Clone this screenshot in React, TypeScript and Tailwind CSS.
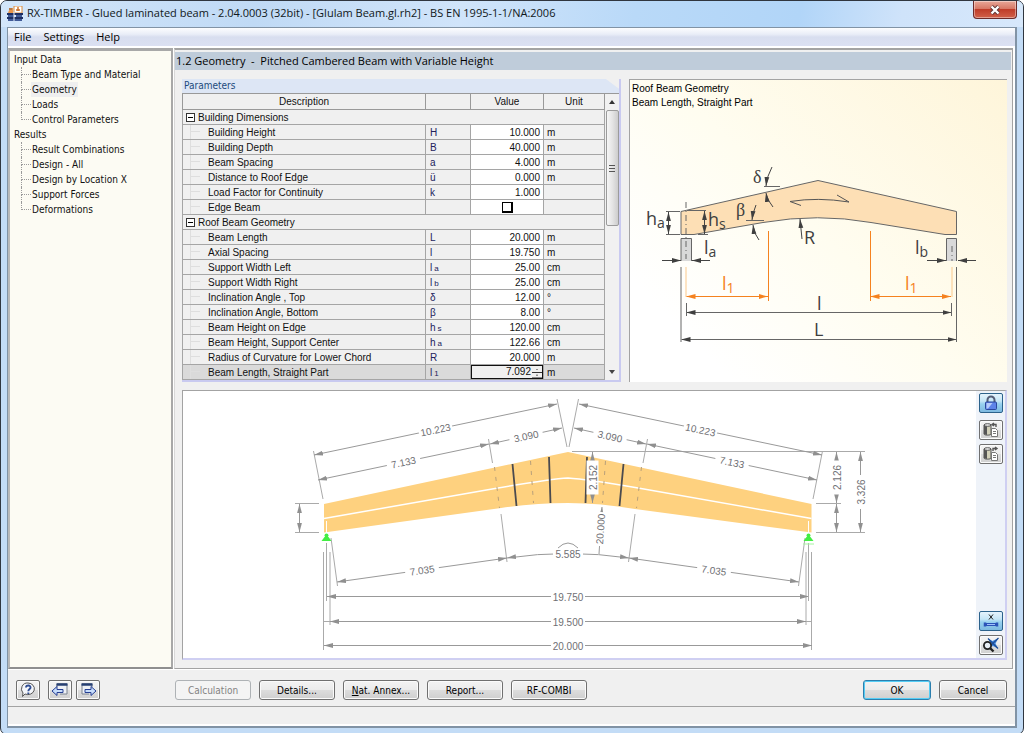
import type { ReactNode } from "react";

type ParamRow = {
  name: string;
  symbol?: string;
  sub?: string;
  value?: string;
  unit?: string;
  kind?: "check" | "active";
};

const navigation = [
  { title: "Input Data", items: ["Beam Type and Material", "Geometry", "Loads", "Control Parameters"] },
  {
    title: "Results",
    items: ["Result Combinations", "Design - All", "Design by Location X", "Support Forces", "Deformations"],
  },
];

const groups: { title: string; rows: ParamRow[] }[] = [
  {
    title: "Building Dimensions",
    rows: [
      { name: "Building Height", symbol: "H", value: "10.000", unit: "m" },
      { name: "Building Depth", symbol: "B", value: "40.000", unit: "m" },
      { name: "Beam Spacing", symbol: "a", value: "4.000", unit: "m" },
      { name: "Distance to Roof Edge", symbol: "ü", value: "0.000", unit: "m" },
      { name: "Load Factor for Continuity", symbol: "k", value: "1.000" },
      { name: "Edge Beam", kind: "check" },
    ],
  },
  {
    title: "Roof Beam Geometry",
    rows: [
      { name: "Beam Length", symbol: "L", value: "20.000", unit: "m" },
      { name: "Axial Spacing", symbol: "l", value: "19.750", unit: "m" },
      { name: "Support Width Left", symbol: "l", sub: "a", value: "25.00", unit: "cm" },
      { name: "Support Width Right", symbol: "l", sub: "b", value: "25.00", unit: "cm" },
      { name: "Inclination Angle , Top", symbol: "δ", value: "12.00", unit: "°" },
      { name: "Inclination Angle, Bottom", symbol: "β", value: "8.00", unit: "°" },
      { name: "Beam Height on Edge", symbol: "h", sub: "s", value: "120.00", unit: "cm" },
      { name: "Beam Height, Support Center", symbol: "h", sub: "a", value: "122.66", unit: "cm" },
      { name: "Radius of Curvature for Lower Chord", symbol: "R", value: "20.000", unit: "m" },
      { name: "Beam Length, Straight Part", symbol: "l", sub: "1", value: "7.092", unit: "m", kind: "active" },
    ],
  },
];

function AppIcon() {
  return (
    <svg className="h-4 w-4" viewBox="0 0 16 16" aria-hidden="true">
      <rect x="7" y="0" width="8" height="7" fill="#fff" stroke="#d98b3d" />
      <path d="M9 4h4M11 1v4" stroke="#c96b24" strokeWidth="1.4" />
      <path d="M1 7c1-4 3-5 5-5v5z" fill="#e7944a" />
      <path d="M2 2h3v2H2z" fill="#b77a46" />
      <path d="M0 8h16M0 12h16" stroke="#1d2f63" strokeWidth="2" />
      <path d="M1 10h6M9 10h6M1 14h14" stroke="#405a97" strokeWidth="2" />
      <path d="M7 6v9" stroke="#e3e9f5" />
    </svg>
  );
}

function TitleBar() {
  return (
    <header className="flex h-[26px] items-start justify-between bg-[linear-gradient(100deg,#d3e6fa_0%,#c0daf5_25%,#d0e4fa_45%,#b9d9f8_62%,#b1d5f8_78%,#cfe3fa_88%,#d7e8fb_100%)] pl-1.5">
      <h1 className="flex h-[25px] items-center gap-1 whitespace-nowrap font-['Open_Sans',sans-serif] text-[11px] text-[#101820]">
        <AppIcon />
        RX-TIMBER - Glued laminated beam - 2.04.0003 (32bit) - [Glulam Beam.gl.rh2] - BS EN 1995-1-1/NA:2006
      </h1>
      <button
        aria-label="Close"
        className="mr-1.5 flex h-[18px] w-11 items-center justify-center rounded-b-[4px] border border-t-0 border-[#6c2b2a] bg-[linear-gradient(#e8a798,#d77866_45%,#bf3c29_50%,#d1614a)] shadow-[inset_0_0_0_1px_rgba(255,255,255,0.4)]"
      >
        <svg className="h-3 w-3" viewBox="0 0 12 12" aria-hidden="true">
          <path d="M2.5 2.5l7 7M9.5 2.5l-7 7" stroke="#5b3434" strokeWidth="4" />
          <path d="M2.5 2.5l7 7M9.5 2.5l-7 7" stroke="#fff" strokeWidth="2.4" />
        </svg>
      </button>
    </header>
  );
}

function MenuBar() {
  return (
    <nav className="flex h-[18px] items-center bg-[linear-gradient(#fcfdfe,#e9edf7_35%,#d8deef_50%,#dbe0f2)] px-1.5 font-['Open_Sans',sans-serif] text-[11px] text-black">
      <button className="pr-3">File</button>
      <button className="pr-3">Settings</button>
      <button>Help</button>
    </nav>
  );
}

function Sidebar() {
  return (
    <aside className="w-[165px] shrink-0 border-2 border-t-[3px] border-[#a8a8a8] border-b-[#8f8f8f] border-l-[#b9b9b9] bg-[#fcfbf3] pt-px pl-1">
      {navigation.map((section) => (
        <div key={section.title}>
          <div className="h-[15px] leading-[15px]">{section.title}</div>
          <ul>
            {section.items.map((item, i) => (
              <li key={item} className="flex h-[15px] items-center whitespace-nowrap">
                <span className="ml-[7px] h-full w-2.5">
                  <span className="block h-2 w-full border-b border-l border-dotted border-[#9a9a9a]" />
                  {i < section.items.length - 1 && (
                    <span className="block h-[7px] border-l border-dotted border-[#9a9a9a]" />
                  )}
                </span>
                <a href="#" className={item === "Geometry" ? "bg-[#efefef] px-px leading-[15px]" : "px-px leading-[15px]"}>
                  {item}
                </a>
              </li>
            ))}
          </ul>
        </div>
      ))}
    </aside>
  );
}

function ValueCell({ row }: { row: ParamRow }) {
  if (row.kind === "check") {
    return (
      <td className="border border-[#a5a5a5] bg-white p-0">
        <input
          type="checkbox"
          aria-label={row.name}
          className="mx-auto block h-[11px] w-[11px] appearance-none border border-r-2 border-b-2 border-black bg-white"
        />
      </td>
    );
  }
  if (row.kind === "active") {
    return (
      <td className="border border-[#a5a5a5] bg-[#f0f0f0] p-0">
        <div className="flex h-[14px] items-center outline-1 -outline-offset-1 outline-[#111] outline-solid">
          <input
            aria-label={row.name}
            defaultValue={row.value}
            className="h-3 w-full min-w-0 flex-1 bg-transparent text-right leading-3 outline-none"
          />
          <svg className="h-3 w-3 shrink-0" viewBox="0 0 12 12" aria-hidden="true">
            <path d="M1 6.500h10M6 3v1M6 8.500v1.500" stroke="#333" strokeWidth="1" />
            <path d="M1 11.500h10" stroke="#888" />
          </svg>
        </div>
      </td>
    );
  }
  return <td className="border border-[#a5a5a5] bg-white p-0 pr-[3px] text-right">{row.value}</td>;
}

function ParameterTable() {
  return (
    <section className="w-[439px] shrink-0 border-r-2 border-b-2 border-[#c9caf0]">
      <h3 className="h-[14px] bg-[#dde6f5] pl-0.5 leading-[14px] text-[#1c4a7c] [clip-path:polygon(0_0,97%_0,100%_70%,100%_100%,0_100%)]">
        Parameters
      </h3>
      <div className="flex">
        <table className="w-[423px] table-fixed border-collapse bg-[#f0f0f0] font-['Liberation_Sans',sans-serif] text-[10px] leading-[13px] text-[#111]">
          <colgroup>
            <col />
            <col className="w-[45px]" />
            <col className="w-[73px]" />
            <col className="w-[61px]" />
          </colgroup>
          <thead>
            <tr className="h-4">
              {["Description", "", "Value", "Unit"].map((label, i) => (
                <th key={i} className="border border-[#999] p-0 font-normal">
                  {label}
                </th>
              ))}
            </tr>
          </thead>
          {groups.map((group) => (
            <tbody key={group.title}>
              <tr className="h-[15px]">
                <td colSpan={4} className="border border-[#a5a5a5] p-0">
                  <div className="flex items-center gap-[3px] pl-[3px]">
                    <button
                      aria-label={`Collapse ${group.title}`}
                      className="flex h-[9px] w-[9px] items-center justify-center border border-[#333] bg-white"
                    >
                      <span className="h-px w-[5px] bg-black" />
                    </button>
                    {group.title}
                  </div>
                </td>
              </tr>
              {group.rows.map((row) => (
                <tr key={row.name} className={row.kind === "active" ? "h-[15px] bg-[#dadada]" : "h-[15px]"}>
                  <td className="border border-[#a5a5a5] p-0">
                    <div className="flex h-[14px] items-center whitespace-nowrap pl-[7px]">
                      <span className="h-full w-2.5 border-l border-[#dedede]">
                        <span className="block h-[7px] border-b border-[#dedede]" />
                      </span>
                      <span className="pl-2">{row.name}</span>
                    </div>
                  </td>
                  <td className="border border-[#a5a5a5] p-0 pl-1 text-[#22225c]">
                    {row.symbol}
                    {row.sub && <span className="pl-0.5 text-[8px] leading-none">{row.sub}</span>}
                  </td>
                  <ValueCell row={row} />
                  <td className="border border-[#a5a5a5] p-0 pl-[3px]">{row.unit}</td>
                </tr>
              ))}
            </tbody>
          ))}
        </table>
        <div className="flex flex-1 flex-col items-center border-t border-[#999] bg-[#f1f1f1]">
          <svg className="my-1.5 h-1 w-1.5" viewBox="0 0 6 4" aria-hidden="true">
            <path d="M0 4l3-4 3 4z" fill="#333" />
          </svg>
          <div className="flex h-[116px] w-[13px] items-center justify-center rounded-[2px] border border-[#9b9b9b] bg-[linear-gradient(90deg,#f6f6f6,#e4e4e4_50%,#cdcdcd)]">
            <span className="h-[7px] w-1.5 border-y border-[#555] bg-[linear-gradient(transparent_40%,#555_40%,#555_60%,transparent_60%)]" />
          </div>
          <svg className="mt-auto mb-1.5 h-1 w-1.5" viewBox="0 0 6 4" aria-hidden="true">
            <path d="M0 0l3 4 3-4z" fill="#444" />
          </svg>
        </div>
      </div>
    </section>
  );
}

function ArrowMarker({ id, color }: { id: string; color: string }) {
  return (
    <marker
      id={id}
      viewBox="0 0 9 6"
      refX="9"
      refY="3"
      markerWidth="9"
      markerHeight="6"
      markerUnits="userSpaceOnUse"
      orient="auto-start-reverse"
    >
      <path d="M0 0.600L9 3L0 5.400z" fill={color} />
    </marker>
  );
}

function Symbol({ x, y, sub, fill = "#3f3f3f", children }: { x: number; y: number; sub?: string; fill?: string; children: ReactNode }) {
  return (
    <text x={x} y={y} fill={fill} fontSize="18" fontFamily="Open Sans, sans-serif">
      {children}
      {sub && (
        <tspan dy="3" fontSize="14">
          {sub}
        </tspan>
      )}
    </text>
  );
}

function GeometrySketch() {
  return (
    <section className="relative min-w-0 flex-1 border-t border-l border-[#a3a3a3] bg-[linear-gradient(225deg,#fef5da,#fffdf0_50%,#fff_85%)] font-['Liberation_Sans',sans-serif]">
      <p className="absolute top-0.5 left-0.5 text-[10px] leading-[14px] text-black">
        Roof Beam Geometry
        <br />
        Beam Length, Straight Part
      </p>
      <svg className="h-full w-full" viewBox="629 79 377 299" preserveAspectRatio="xMidYMin" role="img" aria-label="Beam geometry">
        <defs>
          <ArrowMarker id="sketch" color="#3f3f3f" />
          <ArrowMarker id="sketch-active" color="#f5821f" />
        </defs>
        <path
          d="M680 210.500L817 179.500L955.500 210.500V233.500H944L870 221.500Q817 212 762 221.500L693 233.500H680z"
          fill="#fddfb5"
          stroke="#666"
        />
        <path d="M680 238h10.500v22H680zM945.500 238H956v22h-10.500z" fill="#d9d9d9" stroke="none" />
        <g fill="none" stroke="#666">
          <path d="M680 260V237.500H690.500V260M945.500 260V237.500H955.500V260" />
          <path d="M685 201V258M951 245V260" strokeDasharray="6 3 1 3" />
          <path d="M665 210.500h14M665 233.500h14M686 209.500h19M697 233.500h10M763 185.500h16M745 219.500h18" />
          <path d="M680 266V341M955.500 266V341M685.500 302v13M950.500 302v13" />
        </g>
        <g fill="none" stroke="#444" markerEnd="url(#sketch)">
          <path d="M667.500 222V211" />
          <path d="M667.500 222V233" />
          <path d="M703.500 222V210" />
          <path d="M703.500 222V233" />
          <path d="M661 259.500H680" />
          <path d="M709 259.500H691" />
          <path d="M926 259.500H945" />
          <path d="M975 259.500H957" />
          <path d="M771 166Q766 175 765 185" />
          <path d="M772 206Q766 199 765 192" />
          <path d="M755 204Q752 211 751 219" />
          <path d="M758 239Q753 233 752 224" />
          <path d="M801 238L799 218" />
        </g>
        <path d="M685.500 311.500H950.500" stroke="#666" markerStart="url(#sketch)" markerEnd="url(#sketch)" />
        <path d="M680.500 338.500H955.500" stroke="#666" markerStart="url(#sketch)" markerEnd="url(#sketch)" />
        <path d="M800 204.500L789 200.500Q817 196 848 201L836 194" fill="none" stroke="#555" />
        <path d="M685 266V296M951 266V296" stroke="#fbc98c" />
        <g stroke="#f5821f">
          <path d="M767.500 230V300M869.500 230V300" />
          <path d="M685.500 295.500H767" markerStart="url(#sketch-active)" markerEnd="url(#sketch-active)" />
          <path d="M869.500 295.500H950" markerStart="url(#sketch-active)" markerEnd="url(#sketch-active)" />
        </g>
        <Symbol x={645} y={224} sub="a">h</Symbol>
        <Symbol x={707} y={225} sub="s">h</Symbol>
        <Symbol x={703} y={253} sub="a">l</Symbol>
        <Symbol x={914} y={253} sub="b">l</Symbol>
        <Symbol x={721} y={289} sub="1" fill="#f5821f">l</Symbol>
        <Symbol x={904} y={289} sub="1" fill="#f5821f">l</Symbol>
        <Symbol x={803} y={243}>R</Symbol>
        <Symbol x={816} y={309}>l</Symbol>
        <Symbol x={813} y={335}>L</Symbol>
        <g fontFamily="Liberation Serif, serif" fontSize="18" fill="#3f3f3f">
          <text x="752" y="182">δ</text>
          <text x="735" y="215">β</text>
        </g>
      </svg>
    </section>
  );
}

type DimensionProps = { x1: number; y1: number; x2: number; y2: number; label?: string };

// Dimension line with arrowheads and its label centred on the line
function Dimension({ x1, y1, x2, y2, label }: DimensionProps) {
  const angle = (Math.atan2(y2 - y1, x2 - x1) * 180) / Math.PI;
  return (
    <g>
      <line x1={x1} y1={y1} x2={x2} y2={y2} stroke="#999" markerStart="url(#dim)" markerEnd="url(#dim)" />
      {label && (
        <g transform={`translate(${(x1 + x2) / 2} ${(y1 + y2) / 2}) rotate(${angle})`}>
          <rect x="-17" y="-6" width="34" height="12" fill="#fff" />
          <text y="4" textAnchor="middle">
            {label}
          </text>
        </g>
      )}
    </g>
  );
}

function Support({ x }: { x: number }) {
  return (
    <g>
      <path d={`M${x} 520V532`} stroke="#fff" />
      <path d={`M${x} 542V600`} stroke="#aaa" />
      <circle cx={x} cy="534.500" r="2" fill="#43ee43" />
      <path d={`M${x - 5} 540L${x - 2} 536H${x + 2}L${x + 5} 540z`} fill="#43ee43" />
    </g>
  );
}

function BeamDrawing() {
  return (
    <svg className="h-full w-full min-w-0 flex-1" viewBox="183 390 793 267" role="img" aria-label="Dimensioned beam">
      <defs>
        <ArrowMarker id="dim" color="#909090" />
      </defs>
      <path
        d="M324 503L568 451L811.500 503V531.500L635 508Q601 502 568 502Q535 502 501 507L324 531.500z"
        fill="#fed17f"
      />
      <path d="M324 517.500L495 487.500Q550 478 568 477Q586 478 641 487.500L811.500 517.500" fill="none" stroke="#fff" strokeWidth="1.500" />
      <path
        d="M512.500 463L516.500 505M549 456L550.500 502M587 456L585.500 502M623.500 463L619.500 505"
        stroke="#4a4a4f"
        strokeWidth="1.800"
      />
      <path
        d="M494.500 466L499.500 507M530.500 460L533.500 502M605.500 460L602.500 502M641.500 466L636.500 507"
        stroke="#b9a07a"
        strokeDasharray="4 6"
      />
      <path
        d="M313.500 450L323 498M488.500 438L492.500 462M557 398L567 446M822.500 450L813 498M647.500 438L643 462M578.500 398L569 446
          M295 502.500H319M295 531.500H319M331 537L337.500 585M501 513L507 561M805 537L798.500 585M635 513L628.500 561
          M323.500 551V649M330 551V624M806 551V624M811.500 551V649M572 450.500H865M816 502.500H841M816 531.500H865
          M324 620.500H330M806 620.500H811"
        stroke="#aaa"
      />
      <g fill="#6f6f74" fontSize="10" fontFamily="Liberation Sans, sans-serif">
        <Dimension x1={314} y1={454} x2={557} y2={403} label="10.223" />
        <Dimension x1={318} y1={479} x2={489} y2={443} label="7.133" />
        <Dimension x1={490} y1={443} x2={562} y2={427} label="3.090" />
        <Dimension x1={579} y1={403} x2={822} y2={454} label="10.223" />
        <Dimension x1={574} y1={427} x2={646} y2={443} label="3.090" />
        <Dimension x1={647} y1={443} x2={817} y2={479} label="7.133" />
        <Dimension x1={337} y1={581} x2={507} y2={557} label="7.035" />
        <Dimension x1={629} y1={557} x2={799} y2={581} label="7.035" />
        <Dimension x1={327} y1={595.5} x2={809} y2={595.5} label="19.750" />
        <Dimension x1={330} y1={620.5} x2={806} y2={620.5} label="19.500" />
        <Dimension x1={324} y1={644.5} x2={812} y2={644.5} label="20.000" />
        <Dimension x1={299.5} y1={531} x2={299.5} y2={503} />
        <Dimension x1={836.5} y1={502} x2={836.5} y2={451} label="2.126" />
        <Dimension x1={836.5} y1={531} x2={836.5} y2={503} />
        <Dimension x1={860.5} y1={531} x2={860.5} y2={451} label="3.326" />
        <Dimension x1={592.5} y1={502} x2={592.5} y2={451} label="2.152" />
        <path d="M507 557Q568 548 629 557" fill="none" stroke="#999" markerStart="url(#dim)" markerEnd="url(#dim)" />
        <rect x="553" y="547" width="30" height="12" fill="#fff" />
        <path d="M558 547Q568 537 578 547" fill="none" stroke="#999" />
        <text x="568" y="557" textAnchor="middle">5.585</text>
        <path d="M599 553L602 506" stroke="#999" markerEnd="url(#dim)" />
        <g transform="translate(600 528) rotate(-86)">
          <rect x="-17" y="-6" width="34" height="12" fill="#fff" />
          <text y="4" textAnchor="middle">20.000</text>
        </g>
      </g>
      <Support x={326.5} />
      <Support x={808.5} />
      <path d="M803 543h11" stroke="#a5f5a0" />
    </svg>
  );
}

function IconButton({ label, pressed, children }: { label: string; pressed?: boolean; children: ReactNode }) {
  return (
    <button
      aria-label={label}
      className={
        pressed
          ? "flex h-5 w-6 items-center justify-center rounded-[2px] border border-[#2c628b] bg-[linear-gradient(#e5f3fc,#c4e5f6_40%,#98d1ef_55%,#7db9e0)]"
          : "flex h-5 w-6 items-center justify-center rounded-[2px] border border-[#707070] bg-[linear-gradient(#f4f4f4,#ebebeb_50%,#dddddd_50%,#d0d0d0)] shadow-[inset_0_0_0_1px_#fbfbfb]"
      }
    >
      <svg className="h-4 w-[18px]" viewBox="0 0 18 16" fill="none" aria-hidden="true">
        {children}
      </svg>
    </button>
  );
}

function CopyGlyph({ arrow }: { arrow: string }) {
  return (
    <>
      <path d="M2 3v9c0 1.500 7 1.500 7 0V3z" fill="#d2d0b9" stroke="#555" />
      <path d="M2 3v9l3 1V3z" fill="#555" />
      <ellipse cx="5.500" cy="3" rx="3.500" ry="1.300" fill="#eee" stroke="#555" />
      <path d="M9.500 6.500h4l2 2v6h-6z" fill="#fff" stroke="#777" />
      <path d="M11 9.500h3M11 11.500h3" stroke="#777" />
      <path d={arrow} stroke="#555" strokeWidth="1.400" />
    </>
  );
}

function DrawingPanel() {
  return (
    <section className="flex min-h-[260px] flex-1 border border-r-2 border-b-2 border-[#a3a3a3] border-r-[#cfcff2] border-b-[#cfcff2] bg-white">
      <BeamDrawing />
      <div className="flex w-[29px] shrink-0 flex-col items-center bg-[#eff3f9] pt-0.5 pb-[3px]">
        <IconButton label="Lock view" pressed>
          <path d="M5.500 8V5a3.500 3.500 0 0 1 7 0v3" stroke="#555e78" strokeWidth="2" />
          <rect x="3.500" y="7" width="11" height="7.500" rx="1" fill="#5d83e8" stroke="#2b479d" />
          <path d="M4.500 8h6L6 13.500H4.500z" fill="#b5cbfa" />
        </IconButton>
        <div className="mt-[7px] mb-auto flex flex-col gap-1">
          <IconButton label="Load from library">
            <CopyGlyph arrow="M14 5V2.500H10M12 1l-2 1.500L12 4" />
          </IconButton>
          <IconButton label="Save to library">
            <CopyGlyph arrow="M11 5V2.500H14M13 1l2 1.500L13 4" />
          </IconButton>
        </div>
        <div className="flex flex-col gap-1">
          <IconButton label="Show dimensions" pressed>
            <path d="M7 1.500l4 5M11 1.500l-4 5" stroke="#222" />
            <path d="M3 9.500v4M15 9.500v4" stroke="#2b54b8" strokeWidth="2.500" />
            <path d="M3 11.500h12" stroke="#2b54b8" strokeWidth="3" />
            <path d="M5 11.500h8" stroke="#9fc0fa" />
          </IconButton>
          <IconButton label="Zoom to fit">
            <path d="M6 1.500l4.500 2.500L16.500 1l-3 5.500 2.500 5-5-2.500-5 2 2.500-5z" fill="#3f86dc" />
            <path d="M6 1.500l10 10M16.500 1L6 11" stroke="#1f4d97" strokeWidth="1.200" />
            <circle cx="5.500" cy="8.500" r="3.600" fill="#e8eef5" stroke="#222" strokeWidth="1.800" />
            <path d="M8 11l3.500 3.500" stroke="#222" strokeWidth="2.400" />
          </IconButton>
        </div>
      </div>
    </section>
  );
}

const buttonClass =
  "h-5 rounded-[3px] border border-[#707070] bg-[linear-gradient(#f3f3f3,#ebebeb_50%,#dddddd_50%,#cfcfcf)] text-center text-black shadow-[inset_0_0_0_1px_#fbfbfb]";

function Footer() {
  return (
    <footer className="flex h-9 shrink-0 items-center justify-between pt-1 pr-2 pl-2">
      <div className="flex w-[159px] items-center gap-1">
        <IconButton label="Help">
          <path d="M9 1a6.500 5.800 0 1 1-3 11L3.500 14.500 4 11A6 6 0 0 1 9 1z" fill="#f4f6fa" stroke="#555" />
          <path d="M7 5.500c0-3 5-2.500 4.500.300C11.200 7.200 9.300 7 9.300 9.300M9.300 10.500v1.500" stroke="#304e93" strokeWidth="1.900" />
        </IconButton>
        <span className="w-0" />
        <IconButton label="Previous page">
          <path d="M6 5V2h10v10H9" fill="#eef1f6" stroke="#7b828f" />
          <path d="M5.500 2.500h11" stroke="#263f72" strokeWidth="2.500" />
          <path d="M1 9l5-4.500V7.500h6v3H6v3z" fill="#c6dcfb" stroke="#263f93" />
        </IconButton>
        <IconButton label="Next page">
          <path d="M10 12H3V2h10v3" fill="#eef1f6" stroke="#7b828f" />
          <path d="M2.500 2.500h11" stroke="#263f72" strokeWidth="2.500" />
          <path d="M17 9l-5-4.500V7.500H6v3h6v3z" fill="#c6dcfb" stroke="#263f93" />
        </IconButton>
      </div>
      <div className="mr-auto flex gap-2">
        <button disabled className="h-5 w-[76px] rounded-[3px] border border-[#aeb2b5] bg-[#f4f4f4] text-[#838383]">
          Calculation
        </button>
        <button className={`w-[76px] ${buttonClass}`}>Details...</button>
        <button className={`w-[76px] ${buttonClass}`}>
          <u>N</u>at. Annex...
        </button>
        <button className={`w-[76px] ${buttonClass}`}>Report...</button>
        <button className={`w-[76px] ${buttonClass}`}>RF-COMBI</button>
      </div>
      <div className="flex gap-2">
        <button className="h-5 w-[68px] rounded-[3px] border border-[#2c7fae] bg-[linear-gradient(#f3f3f3,#ebebeb_50%,#dddddd_50%,#cfcfcf)] text-black shadow-[inset_0_0_0_1px_#55cdf5]">
          OK
        </button>
        <button className={`w-[68px] ${buttonClass}`}>Cancel</button>
      </div>
    </footer>
  );
}

export default function App() {
  return (
    <div className="min-h-screen bg-white">
      <div className="flex min-h-screen flex-col overflow-hidden rounded-[7px] border border-[#30363f] bg-[#c3dcf6] px-1.5 pb-1.5 font-['DejaVu_Sans_Condensed','DejaVu_Sans',sans-serif] text-[10px] text-[#111]">
        <div className="-mx-1.5">
          <TitleBar />
        </div>
        <div className="flex flex-1 flex-col border border-[#8193a5] border-b-2 border-r-2 bg-[#f0f0f0]">
          <MenuBar />
          <main className="flex flex-1 gap-px bg-white pt-0.5 pr-0.5">
            <Sidebar />
            <div className="flex min-w-0 flex-1 flex-col border border-t-2 border-[#a3a3a3] border-l-[#d8d8d8] bg-[#f0f0f0] pr-px">
              <h2 className="h-[20px] border-t-2 border-[#f0f0f0] bg-[#bfccda] bg-clip-padding pl-px font-['Open_Sans',sans-serif] text-[11px] leading-[18px] whitespace-pre text-black">
                1.2 Geometry  -  Pitched Cambered Beam with Variable Height
              </h2>
              <div className="flex flex-1 flex-col gap-2 pt-[9px] pr-1 pb-2 pl-[7px]">
                <div className="flex gap-2">
                  <ParameterTable />
                  <GeometrySketch />
                </div>
                <DrawingPanel />
              </div>
            </div>
          </main>
          <div className="h-px bg-white" />
          <Footer />
          <div className="h-5 border-t border-b-2 border-t-[#a3a3a3] border-b-white" />
        </div>
      </div>
    </div>
  );
}
